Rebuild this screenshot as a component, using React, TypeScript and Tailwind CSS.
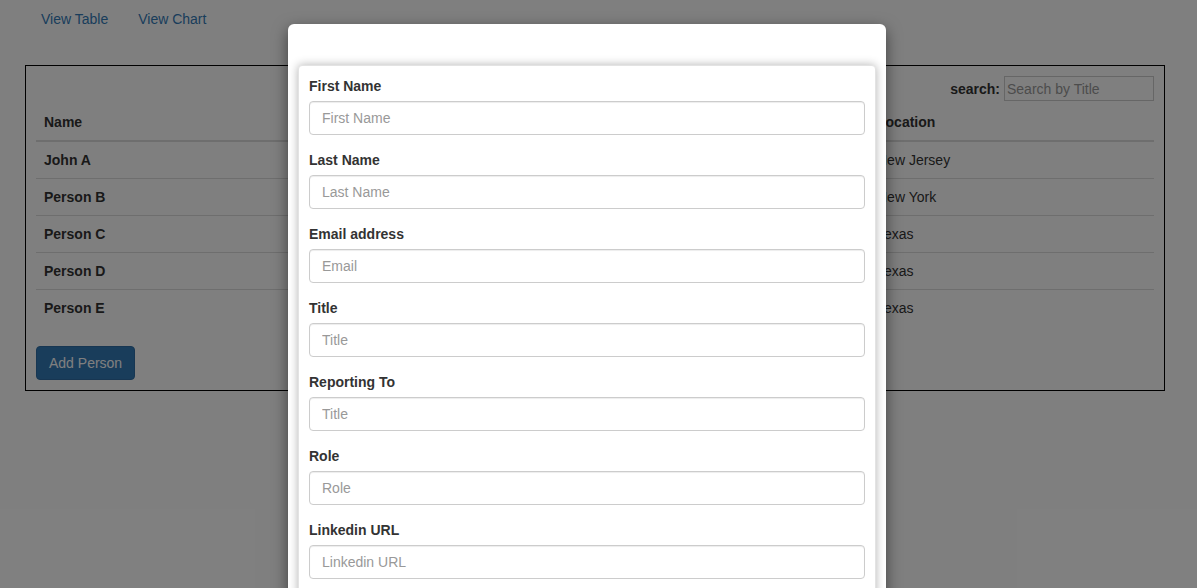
import React from "react";

const people = [
  { name: "John A", title: "CEO", role: "Executive", location: "New Jersey" },
  { name: "Person B", title: "CTO", role: "Executive", location: "New York" },
  { name: "Person C", title: "Engineer", role: "Developer", location: "Texas" },
  { name: "Person D", title: "Engineer", role: "Developer", location: "Texas" },
  { name: "Person E", title: "Designer", role: "Design", location: "Texas" },
];

const fields = [
  { label: "First Name", placeholder: "First Name" },
  { label: "Last Name", placeholder: "Last Name" },
  { label: "Email address", placeholder: "Email" },
  { label: "Title", placeholder: "Title" },
  { label: "Reporting To", placeholder: "Title" },
  { label: "Role", placeholder: "Role" },
  { label: "Linkedin URL", placeholder: "Linkedin URL" },
];

const App = () => {
  return (
    <div className="relative h-[588px] w-full overflow-hidden bg-white font-['Liberation_Sans',Arial,sans-serif] text-[14px] leading-[20px] text-[#333]">
      {/* Nav */}
      <ul className="flex pl-[26px]">
        <li>
          <a href="#" className="block px-[15px] py-[9px] text-[#337ab7]">
            View Table
          </a>
        </li>
        <li>
          <a href="#" className="block px-[15px] py-[9px] text-[#337ab7]">
            View Chart
          </a>
        </li>
      </ul>

      {/* Table panel */}
      <div className="mx-[25px] mt-[27px] w-[1140px] border border-black px-[10px] pb-[10px] pt-[10px]">
        <div className="flex items-center justify-end gap-[4px]">
          <span className="font-bold">search:</span>
          <input
            placeholder="Search by Title"
            className="h-[25px] w-[150px] border border-[#ccc] px-[2px] text-[14px] text-[#333] placeholder:text-[#999] outline-none"
          />
        </div>
        <table className="mt-[3px] w-full border-collapse">
          <thead>
            <tr className="border-b-2 border-[#ddd]">
              <th className="w-[260px] px-[8px] py-[8px] text-left">Name</th>
              <th className="w-[273px] px-[8px] py-[8px] text-left">Title</th>
              <th className="w-[300px] px-[8px] py-[8px] text-left">Role</th>
              <th className="px-[8px] py-[8px] text-left">Location</th>
            </tr>
          </thead>
          <tbody>
            {people.map((p) => (
              <tr key={p.name} className="border-t border-[#ddd] first:border-t-0">
                <th className="px-[8px] py-[8px] text-left">{p.name}</th>
                <td className="px-[8px] py-[8px]">{p.title}</td>
                <td className="px-[8px] py-[8px]">{p.role}</td>
                <td className="px-[8px] py-[8px]">{p.location}</td>
              </tr>
            ))}
          </tbody>
        </table>
        <button className="mt-[20px] rounded-[4px] border border-[#2e6da4] bg-[#337ab7] px-[12px] py-[6px] text-white">
          Add Person
        </button>
      </div>

      {/* Backdrop */}
      <div className="absolute inset-0 bg-black/50" />

      {/* Modal */}
      <div className="absolute left-[288px] top-[24px] w-[598px] rounded-[6px] bg-white shadow-[0_5px_15px_rgba(0,0,0,0.5)]">
        <div className="h-[41px]" />
        <div className="mx-[10px] rounded-[4px] border border-[#e3e3e3] bg-white p-[10px] shadow-[0_0_10px_rgba(0,0,0,0.3)]">
          {fields.map((f) => (
            <div key={f.label} className="mb-[15px]">
              <label className="mb-[5px] block font-bold">{f.label}</label>
              <input
                placeholder={f.placeholder}
                className="block h-[34px] w-full rounded-[4px] border border-[#ccc] px-[12px] py-[6px] text-[14px] text-[#555] shadow-[inset_0_1px_1px_rgba(0,0,0,0.075)] placeholder:text-[#999] outline-none"
              />
            </div>
          ))}
        </div>
      </div>
    </div>
  );
};

export default App;
